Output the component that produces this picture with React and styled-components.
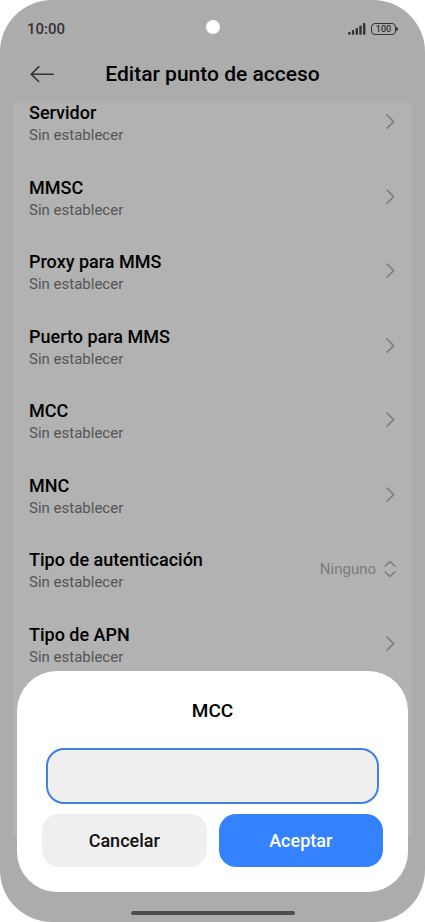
import { useState } from "react";
import styled, { createGlobalStyle } from "styled-components";

const GlobalStyle = createGlobalStyle`
  * {
    box-sizing: border-box;
  }
  body {
    margin: 0;
    background-color: white;
    font-family: Roboto, sans-serif;
  }
`;

const Screen = styled.div`
  position: relative;
  display: flex;
  flex-direction: column;
  min-height: 100vh;
  border-radius: 52px;
  overflow: hidden;
  background-color: #acacac;
`;

const StatusBar = styled.div`
  display: grid;
  grid-template-columns: 1fr auto 1fr;
  align-items: center;
  height: 58px;
  padding: 0 27px;
  color: #333;
`;

const Clock = styled.time`
  font-size: 15px;
  font-weight: 500;
`;

const Camera = styled.div`
  width: 14px;
  height: 14px;
  margin-bottom: 4px;
  border-radius: 50%;
  background-color: white;
`;

const StatusIcons = styled.div`
  display: flex;
  justify-content: flex-end;
  align-items: center;
  gap: 5px;
`;

const Battery = styled.div`
  display: flex;
  align-items: center;
`;

const BatteryBody = styled.div`
  width: 25px;
  height: 12px;
  border: 1px solid #333;
  border-radius: 4px;
  font-size: 9px;
  font-weight: 500;
  line-height: 11px;
  text-align: center;
`;

const BatteryTip = styled.div`
  width: 2px;
  height: 4px;
  border-radius: 0 2px 2px 0;
  background-color: #333;
`;

const Header = styled.header`
  display: grid;
  grid-template-columns: 24px 1fr 24px;
  align-items: center;
  height: 32px;
  margin-bottom: 13px;
  padding: 0 30px;
`;

const BackButton = styled.button`
  display: flex;
  padding: 0;
  border: none;
  background: none;
  color: #333;
`;

const Title = styled.h1`
  margin: 0;
  font-size: 21px;
  font-weight: 500;
  line-height: 32px;
  text-align: center;
  white-space: nowrap;
`;

const List = styled.ul`
  display: grid;
  grid-auto-rows: 1fr;
  min-height: 596px;
  margin: 0 13px;
  padding: 0 0 138px;
  box-sizing: content-box;
  list-style: none;
  background-color: #b2b2b2;
`;

const Item = styled.li`
  display: flex;
`;

const Row = styled.button`
  display: flex;
  flex: 1;
  justify-content: space-between;
  align-items: flex-start;
  padding: 0 16px;
  border: none;
  background: none;
  font-family: inherit;
  text-align: left;
`;

const Name = styled.div`
  color: black;
  font-size: 18px;
  font-weight: 500;
  line-height: 20px;
`;

const Value = styled.div`
  color: #555;
  font-size: 15px;
  line-height: 24px;
`;

const Side = styled.span`
  display: flex;
  align-items: center;
  gap: 8px;
  height: 38px;
  color: #7c7c7c;
  font-size: 15px;
`;

const Overlay = styled.div`
  position: absolute;
  inset: 0;
  display: flex;
  flex-direction: column;
  justify-content: flex-end;
  align-items: center;
  padding: 0 17px 7px;
`;

const Sheet = styled.form`
  width: 100%;
  padding: 28px 25px;
  border-radius: 40px;
  padding-bottom: 25px;
  background-color: white;
`;

const Label = styled.label`
  display: block;
  margin-bottom: 25px;
  font-size: 19px;
  font-weight: 500;
  line-height: 24px;
  text-align: center;
`;

const Field = styled.div`
  display: flex;
  margin-bottom: 10px;
  padding: 0 4px;
`;

const Input = styled.input`
  flex: 1;
  min-width: 0;
  height: 56px;
  padding: 0 16px;
  border: 2px solid #3f80e2;
  border-radius: 18px;
  outline: none;
  background-color: #efefef;
  font-family: inherit;
  font-size: 18px;
`;

const Actions = styled.div`
  display: flex;
  gap: 12px;
`;

const Button = styled.button`
  flex: 1;
  height: 53px;
  border: none;
  border-radius: 17px;
  background-color: ${(props) => (props.$primary ? "#3482ff" : "#efefef")};
  color: ${(props) => (props.$primary ? "white" : "#111")};
  font-family: inherit;
  font-size: 18px;
  font-weight: 500;
`;

const HomeBar = styled.div`
  width: 164px;
  height: 4px;
  margin-top: 19px;
  border-radius: 2px;
  background-color: #4d4d4d;
`;

const settings = [
  { name: "Servidor" },
  { name: "MMSC" },
  { name: "Proxy para MMS" },
  { name: "Puerto para MMS" },
  { name: "MCC" },
  { name: "MNC" },
  { name: "Tipo de autenticación", option: "Ninguno" },
  { name: "Tipo de APN" },
];

const Signal = () => (
  <svg width="18" height="12" viewBox="0 0 18 12" fill="currentColor">
    <rect x="0" y="9" width="2.6" height="2.8" rx="1" />
    <rect x="3.8" y="7" width="2.4" height="4.8" rx="0.8" />
    <rect x="7.6" y="5" width="2.4" height="6.8" rx="0.8" />
    <rect x="11.3" y="2.6" width="2.4" height="9.2" rx="0.8" />
    <rect x="15" y="0" width="2.4" height="11.8" rx="0.8" />
  </svg>
);

const BackArrow = () => (
  <svg width="24" height="17" viewBox="0 0 24 17" fill="none" stroke="currentColor" strokeWidth="1.6" strokeLinecap="round" strokeLinejoin="round">
    <path d="M23.2 8.2H1.2M8.7 0.9L1.2 8.2L8.7 15.5" />
  </svg>
);

const Chevron = () => (
  <svg width="12" height="16" viewBox="0 0 12 16" fill="none" stroke="currentColor" strokeWidth="1.5" strokeLinecap="round" strokeLinejoin="round">
    <path d="M3 1L9.7 7.6L3 14.2" />
  </svg>
);

const UpDown = () => (
  <svg width="12" height="18" viewBox="0 0 12 18" fill="none" stroke="currentColor" strokeWidth="1.5" strokeLinecap="round" strokeLinejoin="round">
    <path d="M1.2 6L6 1.5L10.8 6M1.2 12L6 16.5L10.8 12" />
  </svg>
);

const App = () => {
  const [mcc, setMcc] = useState("");

  return (
    <>
      <GlobalStyle />
      <Screen>
        <StatusBar>
          <Clock>10:00</Clock>
          <Camera />
          <StatusIcons>
            <Signal />
            <Battery>
              <BatteryBody>100</BatteryBody>
              <BatteryTip />
            </Battery>
          </StatusIcons>
        </StatusBar>
        <Header>
          <BackButton type="button" aria-label="Atrás">
            <BackArrow />
          </BackButton>
          <Title>Editar punto de acceso</Title>
        </Header>
        <List>
          {settings.map(({ name, option }) => (
            <Item key={name}>
              <Row type="button">
                <div>
                  <Name>{name}</Name>
                  <Value>Sin establecer</Value>
                </div>
                <Side>
                  {option}
                  {option ? <UpDown /> : <Chevron />}
                </Side>
              </Row>
            </Item>
          ))}
        </List>
        <Overlay>
          <Sheet role="dialog" onSubmit={(e) => e.preventDefault()}>
            <Label htmlFor="mcc">MCC</Label>
            <Field>
              <Input id="mcc" value={mcc} onChange={(e) => setMcc(e.target.value)} />
            </Field>
            <Actions>
              <Button type="button" onClick={() => setMcc("")}>Cancelar</Button>
              <Button type="submit" $primary>Aceptar</Button>
            </Actions>
          </Sheet>
          <HomeBar />
        </Overlay>
      </Screen>
    </>
  );
};

export default App;
